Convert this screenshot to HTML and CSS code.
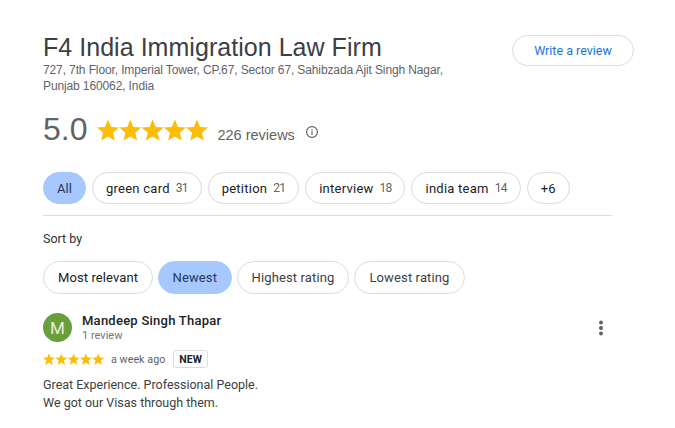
FILE: index.html
```html
<!DOCTYPE html>
<html lang="en">
<head>
<meta charset="utf-8">
<title>Reviews</title>
<link rel="stylesheet" href="styles.css">
</head>
<body>
<main class="panel">
  <header class="head">
    <div class="head-text">
      <h1 class="title">F4 India Immigration Law Firm</h1>
      <p class="address">727, 7th Floor, Imperial Tower, CP.67, Sector 67, Sahibzada Ajit Singh Nagar,<br>Punjab 160062, India</p>
    </div>
    <button class="write">Write a review</button>
  </header>
  <div class="rating">
    <span class="score">5.0</span>
    <svg class="stars-big" viewBox="0 0 111 22" width="111" height="22" fill="#fbbc04" aria-hidden="true">
      <path d="M11 .6l3 7.400 8 .6-6.100 5.200 1.900 7.800L11 17.400 4.200 21.600l1.900-7.800L0 8.600l8-.6z"/>
      <path transform="translate(22.300)" d="M11 .6l3 7.400 8 .6-6.100 5.200 1.900 7.800L11 17.400 4.200 21.600l1.900-7.800L0 8.600l8-.6z"/>
      <path transform="translate(44.600)" d="M11 .6l3 7.400 8 .6-6.100 5.200 1.900 7.800L11 17.400 4.200 21.600l1.900-7.800L0 8.600l8-.6z"/>
      <path transform="translate(66.900)" d="M11 .6l3 7.400 8 .6-6.100 5.200 1.900 7.800L11 17.400 4.200 21.600l1.900-7.800L0 8.600l8-.6z"/>
      <path transform="translate(89)" d="M11 .6l3 7.400 8 .6-6.100 5.200 1.900 7.800L11 17.400 4.200 21.600l1.900-7.800L0 8.600l8-.6z"/>
    </svg>
    <span class="count">226 reviews</span>
    <svg class="info" viewBox="0 0 14 14" width="14" height="14" aria-hidden="true">
      <circle cx="7" cy="7" r="5.400" fill="none" stroke="#5f6368" stroke-width="1.200"/>
      <rect x="6.400" y="6.200" width="1.200" height="3.800" fill="#5f6368"/>
      <rect x="6.400" y="4" width="1.200" height="1.300" fill="#5f6368"/>
    </svg>
  </div>
  <div class="chips topics">
    <span class="chip compact on">All</span>
    <span class="chip">green card<em>31</em></span>
    <span class="chip">petition<em>21</em></span>
    <span class="chip">interview<em>18</em></span>
    <span class="chip">india team<em>14</em></span>
    <span class="chip compact">+6</span>
  </div>
  <hr class="rule">
  <div class="sort-label">Sort by</div>
  <div class="chips sorts">
    <span class="chip">Most relevant</span>
    <span class="chip on">Newest</span>
    <span class="chip muted">Highest rating</span>
    <span class="chip muted">Lowest rating</span>
  </div>
  <article class="review">
    <div class="author">
      <div class="avatar">M</div>
      <div class="who">
        <div class="name">Mandeep Singh Thapar</div>
        <div class="sub">1 review</div>
      </div>
      <svg class="more" viewBox="0 0 6 16" width="6" height="16" fill="#5f6368" aria-hidden="true">
        <circle cx="3" cy="2.500" r="2"/><circle cx="3" cy="8" r="2"/><circle cx="3" cy="13.500" r="2"/>
      </svg>
    </div>
    <div class="meta">
      <svg class="stars-small" viewBox="0 0 61 12" width="61" height="12" fill="#fbbc04" aria-hidden="true">
        <path d="M6 .5l1.600 4 4.400.3-3.400 2.800 1.100 4.300L6 9.500l-3.700 2.400 1.100-4.300L0 4.800l4.400-.3z"/>
        <path transform="translate(12.300)" d="M6 .5l1.600 4 4.400.3-3.400 2.800 1.100 4.300L6 9.500l-3.700 2.400 1.100-4.300L0 4.800l4.400-.3z"/>
        <path transform="translate(24.600)" d="M6 .5l1.600 4 4.400.3-3.400 2.800 1.100 4.300L6 9.500l-3.700 2.400 1.100-4.300L0 4.800l4.400-.3z"/>
        <path transform="translate(36.900)" d="M6 .5l1.600 4 4.400.3-3.400 2.800 1.100 4.300L6 9.500l-3.700 2.400 1.100-4.300L0 4.800l4.400-.3z"/>
        <path transform="translate(49.200)" d="M6 .5l1.600 4 4.400.3-3.400 2.800 1.100 4.300L6 9.500l-3.700 2.400 1.100-4.300L0 4.800l4.400-.3z"/>
      </svg>
      <span class="ago">a week ago</span>
      <span class="new">NEW</span>
    </div>
    <p class="body">Great Experience. Professional People.<br>We got our Visas through them.</p>
  </article>
</main>
</body>
</html>
```
FILE: styles.css
```css
* { box-sizing: border-box; }
html, body { margin: 0; padding: 0; background: #fff; }
body { width: 675px; height: 428px; overflow: hidden; font-family: Roboto, sans-serif; color: #202124; }
.panel { padding: 32px 41px 0 43px; }
.head { display: flex; justify-content: space-between; align-items: flex-start; }
.title { margin: 0; font: 400 25px/30px "Liberation Sans", Arial, sans-serif; letter-spacing: .04px; color: #3c4043; }
.address { margin: 0; font: 400 12px/16px "Liberation Sans", Arial, sans-serif; letter-spacing: -.12px; color: #5f6368; }
.write { margin-top: 3px; width: 122px; height: 31px; background: #fff; border: 1px solid #dadce0; border-radius: 16px; font: 400 12.500px Roboto, sans-serif; color: #1a73e8; padding: 0; }
.rating { display: flex; align-items: center; margin-top: 15px; height: 40px; }
.score { font: 400 32px/40px "Liberation Sans", Arial, sans-serif; color: #5f6368; }
.stars-big { margin-left: 10px; margin-top: 2px; }
.count { margin-left: 9px; margin-top: 11px; font: 400 14.500px "Liberation Sans", Arial, sans-serif; color: #5f6368; }
.info { margin-left: 10px; margin-top: 5px; }
.chips { display: flex; gap: 6px; }
.topics { margin-top: 23px; }
.chip { display: flex; align-items: center; justify-content: center; height: 32px; padding: 0 13px; border: 1px solid #dadce0; border-radius: 17px; font-size: 13px; letter-spacing: .25px; color: #202124; white-space: nowrap; }
.chip.compact { width: 43px; padding: 0; letter-spacing: 0; }
.chip em { font-style: normal; margin-left: 6px; color: #5f6368; letter-spacing: -.8px; font-size: 12px; }
.chip.on { background: #a6c8ff; border-color: #a6c8ff; color: #1f3760; }
.chip.muted { color: #3c4043; }
.rule { margin: 11px 22px 0 0; border: 0; border-top: 1px solid #dadce0; }
.sort-label { margin-top: 15px; font-size: 12.500px; line-height: 16px; color: #303134; }
.sorts { margin-top: 14px; gap: 5px; }
.sorts .chip { height: 33px; padding: 0 14px; letter-spacing: .1px; }
.sorts .chip.on { padding: 0 13.500px; }
.sorts .chip.muted { letter-spacing: .13px; }
.review { margin-top: 19px; }
.author { display: flex; align-items: flex-start; }
.avatar { width: 29px; height: 29px; border-radius: 50%; background: #689f38; color: #e6f0dc; font-size: 17px; display: flex; align-items: center; justify-content: center; }
.who { margin-left: 10px; flex: 1; }
.name { font-size: 13px; font-weight: 500; line-height: 16px; letter-spacing: .25px; color: #202124; }
.sub { font-size: 11px; line-height: 14px; color: #70757a; }
.more { margin: 7px 30px 0 0; }
.meta { display: flex; align-items: center; margin-top: 7px; }
.ago { margin-left: 7px; font-size: 10.800px; color: #5f6368; }
.new { margin-left: 8px; height: 18px; display: flex; align-items: center; border: 1px solid #dadce0; border-radius: 3px; font-size: 10.500px; font-weight: 700; color: #202124; padding: 0 5px; }
.body { margin: 8px 0 0; font-size: 12.500px; line-height: 18px; color: #3c4043; }
```
